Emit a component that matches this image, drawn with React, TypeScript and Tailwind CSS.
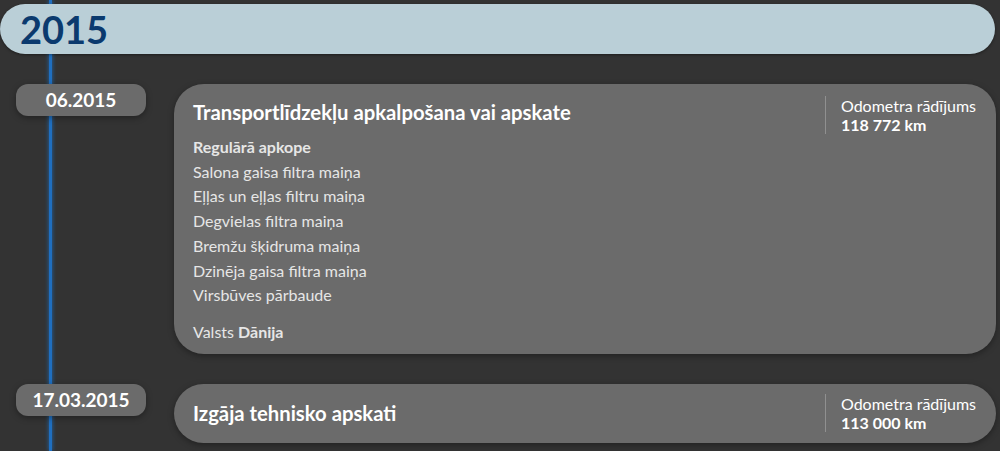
const items = [
    'Salona gaisa filtra maiņa',
    'Eļļas un eļļas filtru maiņa',
    'Degvielas filtra maiņa',
    'Bremžu šķidruma maiņa',
    'Dzinēja gaisa filtra maiņa',
    'Virsbūves pārbaude',
];

function Odometer({ value }: { value: string }) {
    return (
        <div className="flex shrink-0 items-stretch self-start">
            <div className="w-px bg-white/25" />
            <div className="pl-[15px] text-[16px] leading-[19px] text-white">
                <div>Odometra rādījums</div>
                <div className="font-bold">{value}</div>
            </div>
        </div>
    );
}

function DatePill({ date }: { date: string }) {
    return (
        <div className="ml-4 flex h-8 w-[130px] shrink-0 items-center justify-center rounded-[12px] bg-[#6b6b6b] text-[19px] font-bold text-white shadow-[0_2px_6px_rgba(0,0,0,0.35)]">
            {date}
        </div>
    );
}

export default function App() {
    return (
        <div
            className="relative h-[451px] w-[1000px] overflow-hidden bg-[#333333]"
            style={{ fontFamily: 'Lato, "Open Sans", sans-serif' }}
        >
            <div className="absolute top-0 bottom-0 left-[49px] w-[3px] bg-[#1f6fc0] shadow-[0_0_4px_#1f6fc0]" />
            <div className="relative flex flex-col pt-1">
                <div className="mr-[5px] flex h-[50px] items-center rounded-[25px] bg-[#bacfd7] pl-5 shadow-[0_1px_3px_rgba(0,0,0,0.4)]">
                    <span className="text-[38px] font-bold leading-none text-[#0b3a6e]">2015</span>
                </div>

                <div className="mt-[30px] flex items-start">
                    <DatePill date="06.2015" />
                    <div className="ml-7 mr-1 flex flex-1 rounded-[30px] bg-[#6b6b6b] pt-3 pr-5 pb-[10px] pl-[19px] shadow-[0_2px_6px_rgba(0,0,0,0.35)]">
                        <div className="flex-1">
                            <div className="pt-[3px] text-[20.3px] font-bold leading-[26px] text-white">
                                Transportlīdzekļu apkalpošana vai apskate
                            </div>
                            <div className="mt-[10px] text-[16px] leading-[24.7px] text-[#e6e6e6]">
                                <div className="font-bold">Regulārā apkope</div>
                                {items.map((item) => (
                                    <div key={item}>{item}</div>
                                ))}
                            </div>
                            <div className="mt-[12px] text-[16px] leading-[24px] text-[#e6e6e6]">
                                Valsts <span className="font-bold">Dānija</span>
                            </div>
                        </div>
                        <Odometer value="118 772 km" />
                    </div>
                </div>

                <div className="mt-[30px] flex items-start">
                    <DatePill date="17.03.2015" />
                    <div className="ml-7 mr-1 flex h-[59px] flex-1 items-center rounded-[30px] bg-[#6b6b6b] pr-5 pl-[19px] shadow-[0_2px_6px_rgba(0,0,0,0.35)]">
                        <div className="flex-1 text-[20.3px] font-bold text-white">Izgāja tehnisko apskati</div>
                        <div className="self-center">
                            <Odometer value="113 000 km" />
                        </div>
                    </div>
                </div>
            </div>
        </div>
    );
}
